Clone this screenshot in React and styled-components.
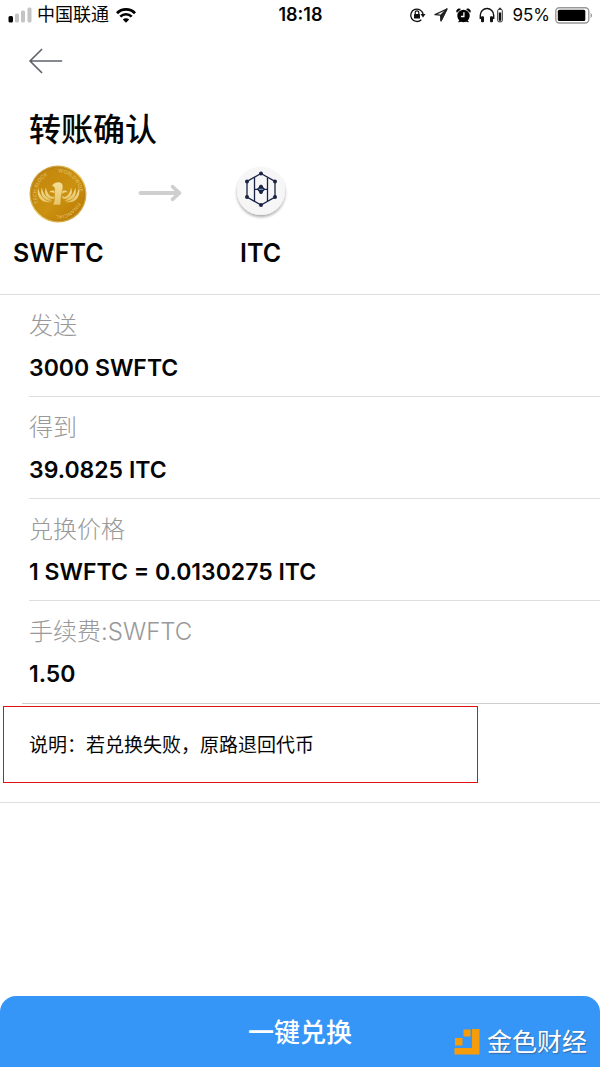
import React from 'react';
import styled, { createGlobalStyle } from 'styled-components';

const fontFamily = "Inter, 'Noto Sans CJK SC', sans-serif";
const textColor = '#050505';
const labelColor = '#999';
const borderColor = '#dedede';
const red = '#e01010';
const blue = '#3596f8';
const orange = '#f59c0b';
const gutter = 29;

const GlobalStyle = createGlobalStyle`
  * {
    box-sizing: border-box;
  }

  body {
    margin: 0;
    background: #fff;
    color: ${textColor};
    font-family: ${fontFamily};
  }

  svg {
    display: block;
    flex: none;
  }
`;

const Page = styled.div`
  min-height: 100vh;
  display: flex;
  flex-direction: column;
`;

const StatusBar = styled.div`
  height: 30px;
  padding: 0 7px 0 8px;
  display: grid;
  grid-template-columns: 1fr auto 1fr;
  align-items: center;
`;

const StatusGroup = styled.div`
  display: flex;
  align-items: center;
  gap: ${({ $gap }) => $gap}px;
  justify-content: ${({ $end }) => ($end ? 'flex-end' : 'flex-start')};
`;

const Carrier = styled.span`
  margin-right: 2px;
  font-size: 18px;
  line-height: 30px;
`;

const Clock = styled.span`
  font-size: 18px;
  line-height: 30px;
  font-weight: 600;
`;

const Percent = styled.span`
  font-size: 17px;
  line-height: 30px;
`;

const NavBar = styled.nav`
  height: 62px;
  padding: 0 ${gutter - 1}px;
  display: flex;
  align-items: center;
`;

const BackButton = styled.button`
  padding: 0;
  border: none;
  background: none;
  cursor: pointer;
`;

const Title = styled.h1`
  margin: 14px ${gutter}px 10px;
  font-size: 32px;
  line-height: 48px;
  font-weight: 500;
`;

const Pair = styled.div`
  padding: 0 13px 24px;
  display: flex;
  gap: 33px;
  border-bottom: 1px solid ${borderColor};
`;

const Coin = styled.div`
  min-width: 90px;
  display: flex;
  flex-direction: column;
  align-items: center;
  gap: 12px;
`;

const CoinIcon = styled.div`
  height: 60px;
  display: flex;
  align-items: center;
`;

const CoinName = styled.span`
  font-size: 25px;
  line-height: 34px;
  font-weight: 600;
`;

const Details = styled.dl`
  margin: 0;
`;

const Detail = styled.div`
  margin-left: ${({ $wide }) => ($wide ? 22 : gutter)}px;
  padding: 14px 0 ${({ $wide }) => ($wide ? 11 : 10)}px ${({ $wide }) => ($wide ? gutter - 22 : 0)}px;
  border-bottom: 1px solid ${({ $wide }) => ($wide ? '#cdcdcd' : borderColor)};
`;

const Label = styled.dt`
  color: ${labelColor};
  font-size: 24px;
  line-height: 34px;
  font-weight: 300;
`;

const Value = styled.dd`
  margin: 8px 0 0;
  font-size: 23px;
  line-height: 35px;
  font-weight: 600;
`;

const NoteSection = styled.section`
  padding: 2px 122px 19px 3px;
  border-bottom: 1px solid ${borderColor};
`;

const Note = styled.p`
  margin: 0;
  padding: 25px 25px 22px;
  border: 1px solid ${red};
  font-size: 19px;
  line-height: 28px;
`;

const Footer = styled.footer`
  position: relative;
  margin-top: auto;
`;

const Submit = styled.button`
  width: 100%;
  height: 71px;
  padding: 0 0 2px;
  border: none;
  border-radius: 16px 16px 0 0;
  background: ${blue};
  color: #fff;
  font-family: ${fontFamily};
  font-size: 26px;
  font-weight: 500;
  cursor: pointer;
`;

const Watermark = styled.div`
  position: absolute;
  right: 13px;
  bottom: 8px;
  display: flex;
  align-items: center;
  gap: 7px;
  color: #fff;
  font-size: 25px;
  line-height: 34px;
  text-shadow: 1px 1px 1px rgba(60, 80, 110, 0.6);
  pointer-events: none;
`;

const SignalIcon = () => (
  <svg width="24" height="16" viewBox="0 0 24 16">
    <rect x="0.5" y="9" width="4.5" height="6.5" rx="1.5" fill="#000" />
    <rect x="7" y="6.5" width="4" height="9" rx="1.5" fill="#c4c4c4" />
    <rect x="13" y="3.5" width="4" height="12" rx="1.5" fill="#c4c4c4" />
    <rect x="19.5" y="0.5" width="4" height="15" rx="1.5" fill="#c4c4c4" />
  </svg>
);

const WifiIcon = () => (
  <svg width="20" height="15" viewBox="0 0 20 15" fill="none" stroke="#000">
    <path d="M1 5.2a12.6 12.6 0 0 1 18 0" strokeWidth="2.8" />
    <path d="M4.3 8.7a8 8 0 0 1 11.4 0" strokeWidth="2.6" />
    <path d="M10 14.7 6.8 11.5a4.6 4.6 0 0 1 6.4 0z" fill="#000" stroke="none" />
  </svg>
);

const LockIcon = () => (
  <svg width="17" height="16" viewBox="0 0 17 16" fill="none" stroke="#111">
    <path d="M12.3 12.7a6.2 6.2 0 1 1 1.8-5.2" strokeWidth="1.3" />
    <path d="M11.5 7h5l-2.500 3.4z" fill="#111" stroke="none" />
    <rect x="5" y="7" width="6" height="4.6" rx="0.6" fill="#111" stroke="none" />
    <path d="M6.2 7V5.6a1.8 1.8 0 0 1 3.6 0V7" strokeWidth="1.2" />
  </svg>
);

const LocationIcon = () => (
  <svg width="14" height="14" viewBox="0 0 14 14" fill="none" stroke="#222" strokeWidth="1.3" strokeLinejoin="round">
    <path d="M12.9 1 1 6.7l5.6.5.4 5.7z" />
    <path d="M12.9 1 7.6 6.4l-.5 6z" fill="#222" />
  </svg>
);

const AlarmIcon = () => (
  <svg width="15" height="15" viewBox="0 0 15 15">
    <circle cx="7.5" cy="8" r="6.2" fill="#000" />
    <path d="M.9 4.3a2.4 2.4 0 0 1 3.5-3zM14.1 4.3a2.4 2.4 0 0 0-3.5-3zM2.6 14l1.6-2 1.2 1zM12.4 14l-1.6-2-1.2 1z" fill="#000" stroke="#000" strokeWidth="0.8" />
    <path d="M7.9 4.3v4.2H4.9" fill="none" stroke="#fff" strokeWidth="1.3" />
  </svg>
);

const HeadphonesIcon = () => (
  <svg width="25" height="16" viewBox="0 0 25 16">
    <path d="M1.3 12V8.2a6.7 6.7 0 0 1 13.4 0V12" fill="none" stroke="#111" strokeWidth="1.4" />
    <rect x="2" y="9.3" width="3" height="6" rx="1" fill="#111" />
    <rect x="11" y="9.3" width="3" height="6" rx="1" fill="#111" />
    <rect x="19.8" y="0.8" width="2.4" height="1.4" fill="#333" />
    <rect x="18.7" y="2.4" width="4.6" height="12.4" rx="1.2" fill="none" stroke="#333" />
    <rect x="19.8" y="5.5" width="2.4" height="8.3" fill="#111" />
  </svg>
);

const BatteryIcon = () => (
  <svg width="38" height="17" viewBox="0 0 38 17">
    <rect x="0.8" y="0.8" width="33" height="15.2" rx="3.5" fill="none" stroke="#999" strokeWidth="1.4" />
    <rect x="2.8" y="2.8" width="27.5" height="11.2" rx="1.5" fill="#000" />
    <path d="M35.6 5.8a3.3 3.3 0 0 1 0 5.2z" fill="#888" />
  </svg>
);

const BackIcon = () => (
  <svg width="36" height="28" viewBox="0 0 36 28" fill="none" stroke="#5f636b" strokeWidth="1.7" strokeLinecap="round" strokeLinejoin="round">
    <path d="M33.5 14H2M13.6 2.5 2 14l11.6 11.5" />
  </svg>
);

const ArrowIcon = () => (
  <svg width="46" height="20" viewBox="0 0 46 20" fill="none" stroke="#cfcfcf" strokeWidth="4" strokeLinecap="round" strokeLinejoin="round">
    <path d="M3.5 9h38" />
    <path d="M35.500 2.6 42.6 9l-7.1 6.4" strokeWidth="3.6" />
  </svg>
);

const Wing = props => (
  <g fill="url(#bird)" {...props}>
    <path d="M9.2 23C7 31.500 12 39 23 37 15.500 36.500 10.800 31 9.200 23z" />
    <path d="M12.800 22.500C10.500 30 15 36.800 24 35.500 18 33.800 13.800 29 12.800 22.500z" />
    <path d="M17 22.500c-2.500 6 .5 11.500 6.500 11.500 1.800 0 2.500-1 2.500-3-1 1-3.500 1.200-5.200-.5-2-2-3.500-4.500-3.800-8z" />
    <path d="M26 26c-2.500-1.200-5-.5-5.600 1.600 1.800-.6 3.800-.2 5.600 1.600z" />
  </g>
);

const SwftIcon = () => (
  <svg width="58" height="58" viewBox="0 0 58 58">
    <defs>
      <linearGradient id="rim" x1="0" y1="0" x2="1" y2="1">
        <stop offset="0" stopColor="#b98318" />
        <stop offset="0.5" stopColor="#f0cf6c" />
        <stop offset="1" stopColor="#c48a15" />
      </linearGradient>
      <linearGradient id="face" x1="0" y1="0" x2="1" y2="1">
        <stop offset="0" stopColor="#c0830d" />
        <stop offset="0.55" stopColor="#cb910f" />
        <stop offset="1" stopColor="#b97503" />
      </linearGradient>
      <linearGradient id="bird" x1="0" y1="0" x2="0" y2="1">
        <stop offset="0" stopColor="#f5df97" />
        <stop offset="1" stopColor="#e6c467" />
      </linearGradient>
      <path id="ringTop" d="M29 7.5a21.500 21.500 0 0 1 21.500 21.500" />
      <path id="ringBottom" d="M48.600 37.500a21.500 21.500 0 0 1-34 7.600" />
      <path id="ringLeft" d="M9.500 38a21.500 21.500 0 0 1 16-30" />
    </defs>
    <circle cx="29" cy="29" r="28.5" fill="url(#rim)" />
    <circle cx="29" cy="29" r="26.8" fill="url(#face)" stroke="#a87210" strokeWidth="0.6" />
    <g fill="#e2bd5c" fontFamily="Inter, sans-serif" fontSize="5" fontWeight="500">
      <text>
        <textPath href="#ringTop">WORLDWIDE</textPath>
      </text>
      <text>
        <textPath href="#ringBottom">FINANCIAL</textPath>
      </text>
      <text>
        <textPath href="#ringLeft">TECH BLOCK</textPath>
      </text>
    </g>
    <Wing />
    <Wing transform="translate(59 0) scale(-1 1)" />
    <path d="M22.500 21c1.800-2.800 4.500-4.200 7.300-4 3 .3 4.400 2.300 4.200 5.200-.3 4-1.800 7.300-2 11.300-.1 2.600 0 4.300-.6 6.500h-7.600c1.500-3 1.800-7 1.800-10.500v-6.300c-.6-1.500-1.700-2.100-3.100-2.200z" fill="url(#bird)" stroke="#c0850c" strokeWidth="0.5" />
  </svg>
);

const ItcIcon = () => (
  <svg width="58" height="60" viewBox="0 0 58 60">
    <defs>
      <filter id="shade" x="-20%" y="-20%" width="140%" height="150%">
        <feDropShadow dx="0" dy="2" stdDeviation="1.6" floodColor="#000" floodOpacity="0.35" />
      </filter>
    </defs>
    <circle cx="29" cy="27" r="24" fill="#f6f6f7" filter="url(#shade)" />
    <g fill="none" stroke="#1a2344" strokeWidth="1.3">
      <path d="M29 9.500 43 17.500V33L29 41 15 33V17.500z" />
      <path d="M22.500 13.500V37M35.500 13.500V37M22.500 25.300H35.500" />
    </g>
    <g fill="#1a2344">
      <path d="m29 20.600 4.200 4.700-4.200 4.700-4.200-4.700z" />
      <circle cx="29" cy="22.600" r="1.900" />
      <circle cx="29" cy="28" r="1.900" />
      <circle cx="29" cy="9.500" r="2" />
      <circle cx="43" cy="17.500" r="2" />
      <circle cx="43" cy="33" r="2" />
      <circle cx="29" cy="41" r="2" />
      <circle cx="15" cy="33" r="2" />
      <circle cx="15" cy="17.500" r="2" />
    </g>
    <path d="M26.800 25.300h4.400" stroke="#8fb3e8" strokeWidth="1" />
  </svg>
);

const JinseIcon = () => (
  <svg width="26" height="26" viewBox="0 0 26 26" fill={orange}>
    <path d="M18 0h7.500v25.500H.5V19H18z" />
    <rect x="9.5" y="0.5" width="7" height="7" />
    <rect x="1" y="9" width="7.5" height="7.5" />
  </svg>
);

const details = [
  { label: '发送', value: '3000 SWFTC' },
  { label: '得到', value: '39.0825 ITC' },
  { label: '兑换价格', value: '1 SWFTC = 0.0130275 ITC' },
  { label: '手续费:SWFTC', value: '1.50', wide: true }
];

const App = () => (
  <Page lang="zh-CN">
    <GlobalStyle />
    <StatusBar>
      <StatusGroup $gap={5}>
        <SignalIcon />
        <Carrier>中国联通</Carrier>
        <WifiIcon />
      </StatusGroup>
      <Clock>18:18</Clock>
      <StatusGroup $gap={8} $end>
        <LockIcon />
        <LocationIcon />
        <AlarmIcon />
        <HeadphonesIcon />
        <StatusGroup $gap={5}>
          <Percent>95%</Percent>
          <BatteryIcon />
        </StatusGroup>
      </StatusGroup>
    </StatusBar>
    <NavBar>
      <BackButton aria-label="返回">
        <BackIcon />
      </BackButton>
    </NavBar>
    <Title>转账确认</Title>
    <Pair>
      <Coin>
        <CoinIcon>
          <SwftIcon />
        </CoinIcon>
        <CoinName>SWFTC</CoinName>
      </Coin>
      <CoinIcon>
        <ArrowIcon />
      </CoinIcon>
      <Coin>
        <CoinIcon>
          <ItcIcon />
        </CoinIcon>
        <CoinName>ITC</CoinName>
      </Coin>
    </Pair>
    <Details>
      {details.map(({ label, value, wide }) => (
        <Detail key={label} $wide={wide}>
          <Label>{label}</Label>
          <Value>{value}</Value>
        </Detail>
      ))}
    </Details>
    <NoteSection>
      <Note>说明：若兑换失败，原路退回代币</Note>
    </NoteSection>
    <Footer>
      <Submit>一键兑换</Submit>
      <Watermark>
        <JinseIcon />
        金色财经
      </Watermark>
    </Footer>
  </Page>
);

export default App;
